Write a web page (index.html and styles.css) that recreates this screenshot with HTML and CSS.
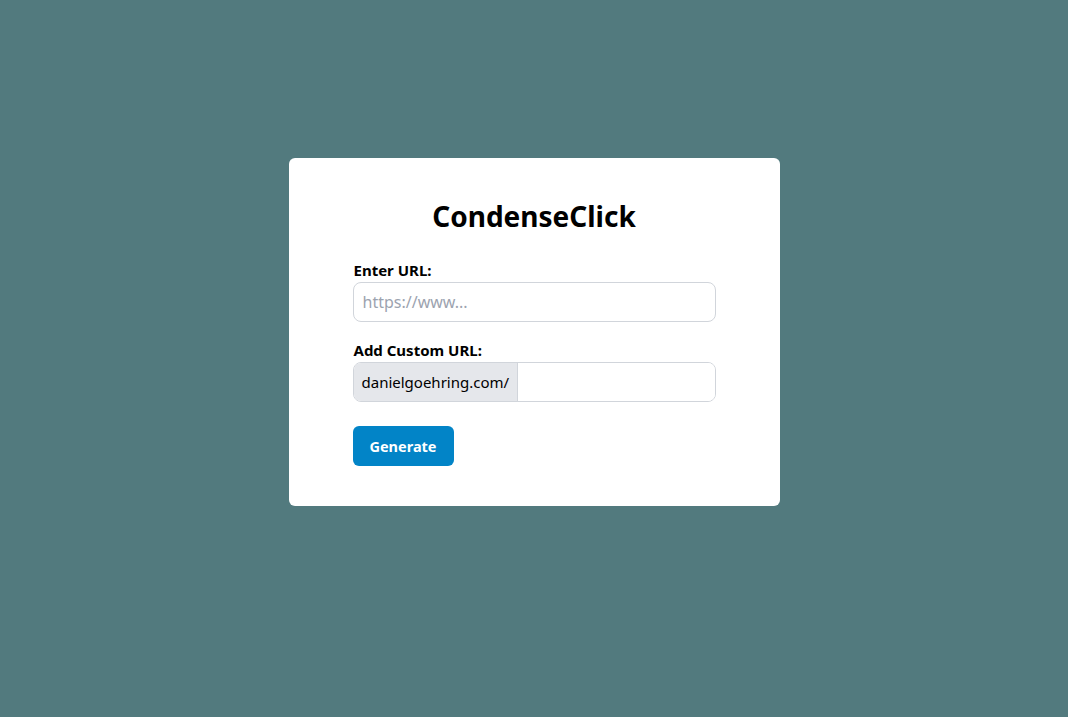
FILE: index.html
```html
<!DOCTYPE html>
<html lang="en">
<head>
<meta charset="utf-8">
<title>CondenseClick</title>
<link rel="stylesheet" href="styles.css">
</head>
<body>
<main class="page">
  <section class="card">
    <h1 class="title">CondenseClick</h1>
    <form class="form">
      <div class="field">
        <label class="label" for="url">Enter URL:</label>
        <input class="input" id="url" type="text" placeholder="https://www...">
      </div>
      <div class="field">
        <label class="label" for="custom">Add Custom URL:</label>
        <div class="group">
          <span class="prefix">danielgoehring.com/</span>
          <input class="group-input" id="custom" type="text">
        </div>
      </div>
      <button class="btn" type="button">Generate</button>
    </form>
  </section>
</main>
</body>
</html>
```
FILE: styles.css
```css
* { box-sizing: border-box; }
html, body { margin: 0; padding: 0; }
body {
  background: #527a7e;
  font-family: "Noto Sans", "Open Sans", "Liberation Sans", sans-serif;
  color: #000;
  min-height: 717px;
}
.page {
  display: flex;
  justify-content: center;
  padding-top: 158px;
}
.card {
  width: 491px;
  background: #fff;
  border-radius: 6px;
  padding: 40px 64px;
}
.title {
  margin: 0 0 28px;
  text-align: center;
  font-size: 28px;
  line-height: 36px;
  font-weight: 700;
}
.form { display: flex; flex-direction: column; }
.field { display: flex; flex-direction: column; margin-bottom: 20px; }
.field + .field { margin-bottom: 24px; }
.label {
  font-size: 15px;
  line-height: 16px;
  font-weight: 700;
  margin: 0 0 4px 1px;
}
.input {
  height: 40px;
  border: 1px solid #d1d5db;
  border-radius: 8px;
  padding: 0 9px;
  font: inherit;
  font-size: 16px;
  outline: none;
}
.input::placeholder { color: #9ca3af; }
.group {
  display: flex;
  height: 40px;
  border: 1px solid #d1d5db;
  border-radius: 8px;
  overflow: hidden;
}
.prefix {
  display: flex;
  align-items: center;
  background: #e5e7eb;
  padding: 0 8px;
  width: 164px;
  font-size: 15px;
  color: #000;
  border-right: 1px solid #d1d5db;
  white-space: nowrap;
}
.group-input {
  flex: 1;
  border: 0;
  outline: none;
  font: inherit;
  padding: 0 8px;
}
.btn {
  align-self: flex-start;
  width: 101px;
  height: 40px;
  border: 0;
  border-radius: 6px;
  background: #0284c7;
  color: #fff;
  font: inherit;
  font-size: 14.5px;
  font-weight: 700;
}
```
